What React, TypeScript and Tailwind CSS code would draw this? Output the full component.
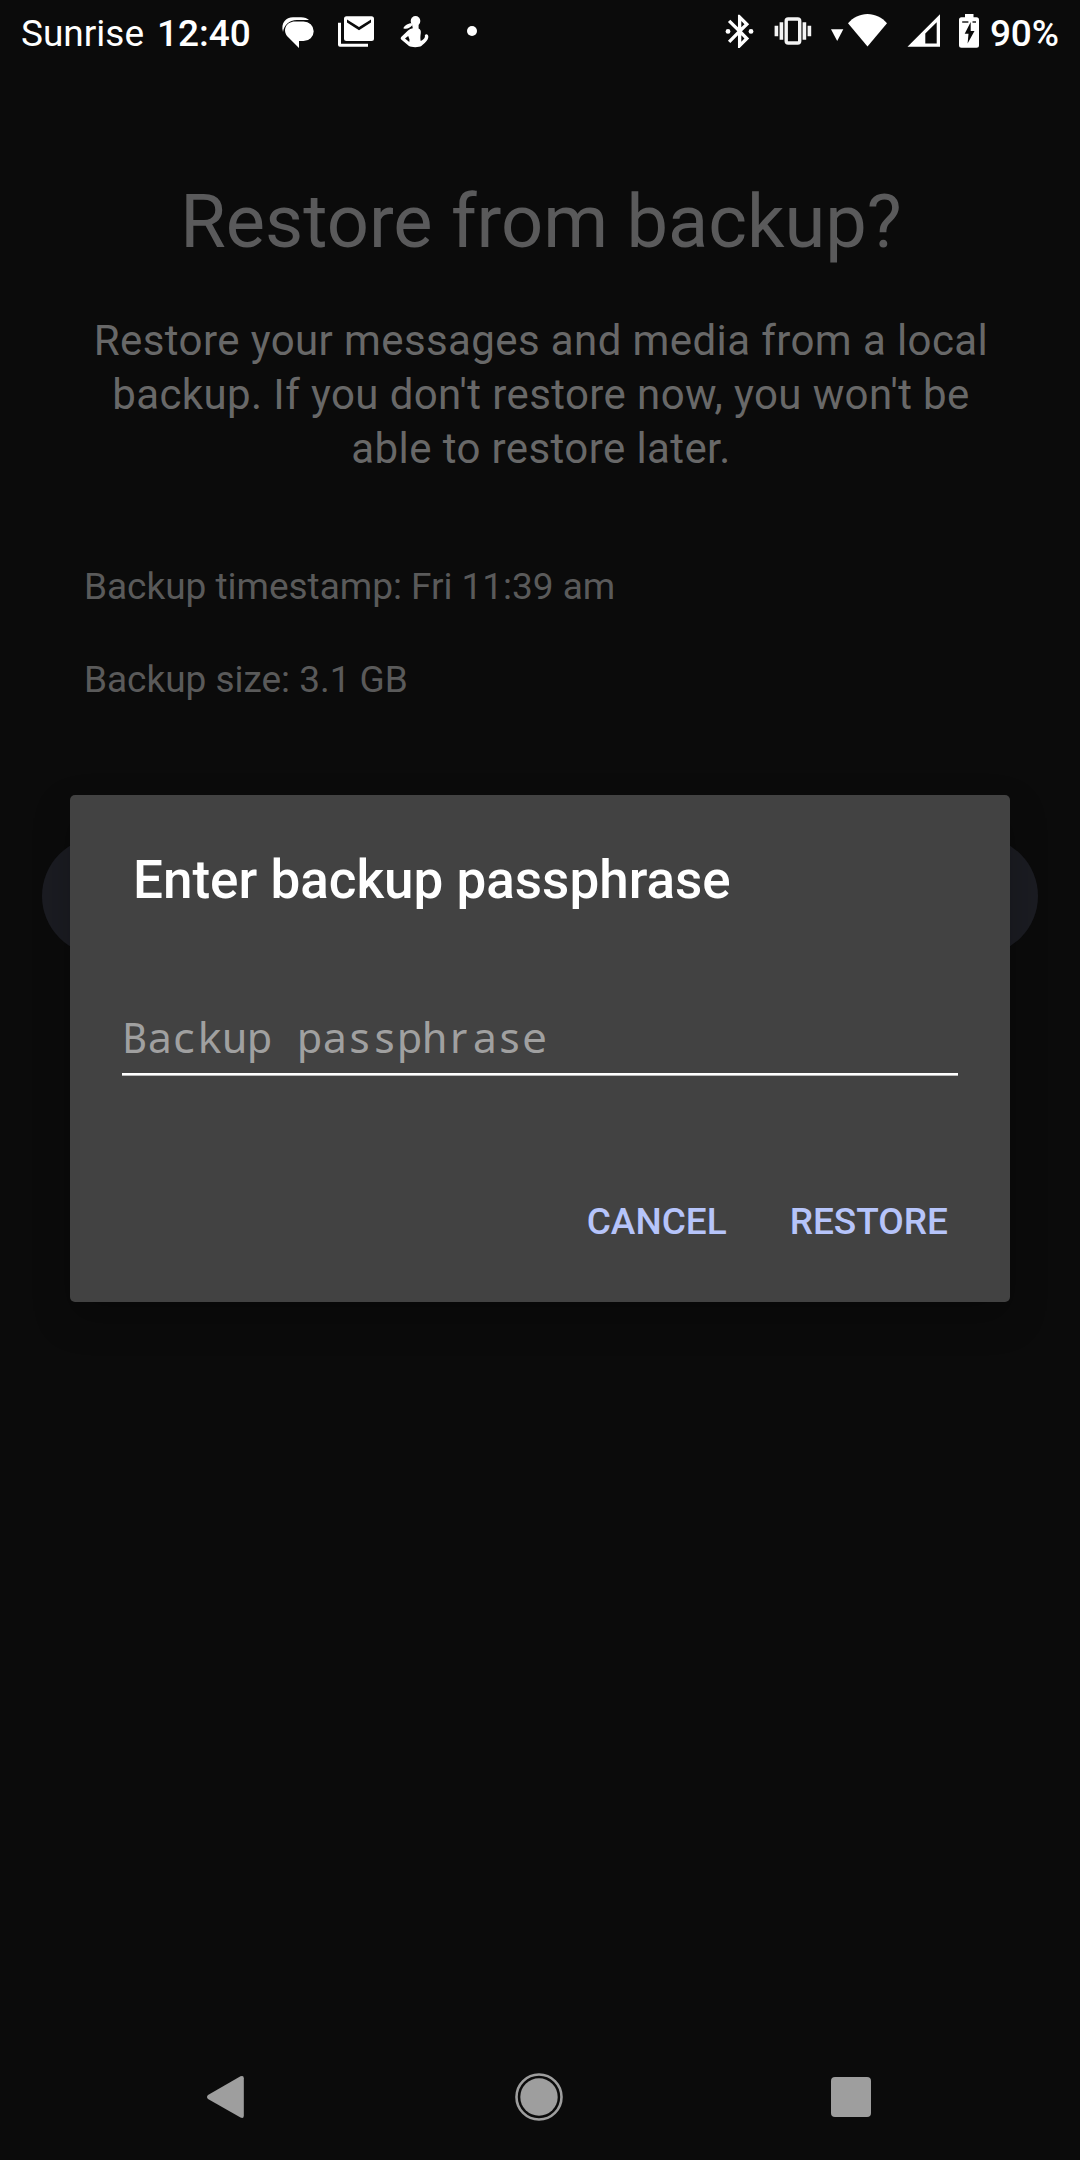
import React from "react";

const sans = "font-['Roboto','Liberation_Sans',sans-serif]";

function NotificationIcons() {
  return (
    <svg className="ml-[29px] h-16 w-[200px] shrink-0" viewBox="280 0 200 64" fill="#fff">
      <path d="M283 32C280.500 23 286 17.300 293 17.300H301C304.500 17.300 307.500 18.500 309 20H297C289 20 284 25 283 32Z" />
      <path d="M295 21.400H303.500A10.200 9.800 0 0 1 303.500 41H299V48L288.500 37.500C281.500 30.500 286 21.400 295 21.400Z" />
      <path d="M338 22.700H341V43.700H368V46.700H340Q338 46.700 338 44.700Z" />
      <path
        fillRule="evenodd"
        d="M346.500 16.200H371.500Q374 16.200 374 18.700V38.500Q374 41 371.500 41H346.500Q344 41 344 38.500V18.700Q344 16.200 346.500 16.200ZM347 19.600V22.600L359 30.200L371 22.600V19.600L359 27Z"
      />
      <ellipse cx="415.500" cy="21" rx="4.800" ry="5" />
      <path d="M412.500 23.200C409 23 405 24.500 403.300 28.300C406.500 29.700 410 28 412 25.500Z" />
      <path
        fillRule="evenodd"
        d="M412 24.500H418.600V28.500C420.500 29.300 421 31 420.800 33C420.300 36 420.200 38.500 420.700 41C422.800 40.200 424.300 38.800 425 36.800C424.300 35.500 425.300 34 426.800 34.200C428.600 34.600 428.800 37.200 427.600 39.400C426.200 42 423.500 44 421.300 46C419.500 47.500 411 47.500 409 46L401.200 39.600Q400 38.400 401.200 37L408 30.500Q410 28.700 412.800 28.200ZM405 38.500L409.300 42L409.500 39.500L408.200 36Z"
      />
      <circle cx="472" cy="31" r="5" />
    </svg>
  );
}

function SystemIcons() {
  return (
    <svg className="ml-auto h-16 w-[260px] shrink-0" viewBox="725 0 260 64" fill="#fff">
      <g transform="translate(719.600 11.300) scale(1.670)">
        <path d="M17.710 7.710L12 2h-1v7.590L6.410 5 5 6.410 10.590 12 5 17.590 6.410 19 11 14.410V22h1l5.710-5.710-4.300-4.290 4.300-4.290zM13 5.830l1.880 1.880L13 9.590V5.830zm1.880 10.460L13 18.170v-3.760l1.880 1.880z" />
      </g>
      <circle cx="728" cy="31.400" r="2.400" />
      <circle cx="751" cy="31.400" r="2.400" />
      <rect x="786.200" y="19" width="13.500" height="24" rx="2" fill="none" stroke="#f4f4f4" strokeWidth="3.400" />
      <path fill="#f4f4f4" d="M779.600 22.300h3.600v17.400h-3.600zM774.600 25.700h3.600v10.600h-3.600zM802.600 22.300h3.600v17.400h-3.600zM807.600 25.700h3.600v10.600h-3.600z" />
      <path d="M831 29.300H843.300L837.200 41Z" />
      <path d="M867.500 46.500L848 23.200C853 17.500 860 14 867.500 14C875 14 882 17.500 887 23.200Z" />
      <path fillRule="evenodd" d="M940 14.300V46.700H907.500ZM936.700 22.300L925.300 33.500V43.400H936.700Z" />
      <path
        fillRule="evenodd"
        d="M965 14H973.500V17.300H976.500Q979 17.300 979 19.800V45.200Q979 47.700 976.500 47.700H961.500Q959 47.700 959 45.200V19.800Q959 17.300 961.500 17.300H965ZM970.700 22L964.700 33.800H968.500L967.600 43.400L974.500 31H970.700Z"
      />
      <path d="M962.200 22H968.400M972.500 22H976" stroke="#222" strokeWidth="1.700" />
    </svg>
  );
}

function StatusBar() {
  return (
    <header className="flex h-16 shrink-0 items-center pl-[21px] pr-[20px] text-[37px] text-white">
      <span className="w-[136px] shrink-0 whitespace-nowrap pt-[3px]">Sunrise</span>
      <span className="w-[94px] shrink-0 whitespace-nowrap pt-[3px] font-medium">12:40</span>
      <NotificationIcons />
      <SystemIcons />
      <span className="ml-[5px] w-[70px] shrink-0 whitespace-nowrap pt-[3px] font-medium tracking-[-0.2px]">90%</span>
    </header>
  );
}

function PassphraseDialog() {
  return (
    <section className="absolute left-[70px] top-[795px] flex h-[507px] w-[940px] flex-col rounded-[5px] bg-[#424242] px-[52px] shadow-[0_16px_36px_rgba(0,0,0,0.25)]">
      <h2 className="mt-[52px] pl-[11px] text-[53px] font-medium leading-[66px] text-white">Enter backup passphrase</h2>
      <div className="mt-[96px] h-[66px] w-[836px] whitespace-nowrap border-b-2 border-white text-[42px] leading-[55px] tracking-[-0.2px] text-[#a0a0a0] font-['Noto_Sans_Mono','DejaVu_Sans_Mono',monospace]">
        Backup passph
        <span className="inline-block w-[25px] pl-[3px] font-['Noto_Sans',sans-serif]">r</span>ase
      </div>
      <div className="h-px w-[836px] bg-[#bbbbbb]" />
      <div className="mt-[115px] flex justify-end gap-[63px] pr-[10px] text-[37px] font-medium leading-[62px] text-[#b6c4fa]">
        <button type="button">CANCEL</button>
        <button type="button">RESTORE</button>
      </div>
    </section>
  );
}

function NavBar() {
  return (
    <nav className="mt-auto flex h-[126px] shrink-0 items-center pl-[207px] text-[#9e9e9e]">
      <svg className="h-[44px] w-[37px]" viewBox="207 2075 37 44" fill="currentColor">
        <path d="M208 2095L240.500 2076.300Q243.800 2075 243.800 2078.300V2115.700Q243.800 2119 240.500 2117.600L208 2099Q206 2097 208 2095Z" />
      </svg>
      <svg className="ml-[271px] h-[48px] w-[48px]" viewBox="-24 -24 48 48" fill="currentColor">
        <circle r="22.500" fill="none" stroke="currentColor" strokeWidth="2.600" />
        <circle r="18.700" />
      </svg>
      <svg className="ml-[268px] h-[40px] w-[40px]" viewBox="0 0 40 40" fill="currentColor">
        <rect width="40" height="40" rx="4" />
      </svg>
    </nav>
  );
}

export default function App() {
  return (
    <div className={`relative flex h-[2160px] w-[1080px] flex-col overflow-hidden bg-[#0b0b0b] ${sans}`}>
      <StatusBar />
      <main className="flex flex-col">
        <h1 className="mt-[114px] pl-[2px] text-center text-[74px] leading-[88px] text-[#5a5a5b]">Restore from backup?</h1>
        <p className="mt-[48px] pl-[2px] text-center text-[42px] leading-[54px] tracking-[0.4px] text-[#686868]">
          Restore your messages and media from a local
          <br />
          backup. If you don't restore now, you won't be
          <br />
          able to restore later.
        </p>
        <p className="mt-[89px] pl-[84px] text-[37px] leading-[44px] tracking-[-0.03px] text-[#5a5a5a]">Backup timestamp: Fri 11:39 am</p>
        <p className="mt-[49px] pl-[84px] text-[37px] leading-[44px] tracking-[-0.03px] text-[#5a5a5a]">Backup size: 3.1 GB</p>
        <div className="mx-[42px] mt-[135px] h-[118px] rounded-full bg-[#1b1c22]" />
      </main>
      <NavBar />
      <PassphraseDialog />
    </div>
  );
}
